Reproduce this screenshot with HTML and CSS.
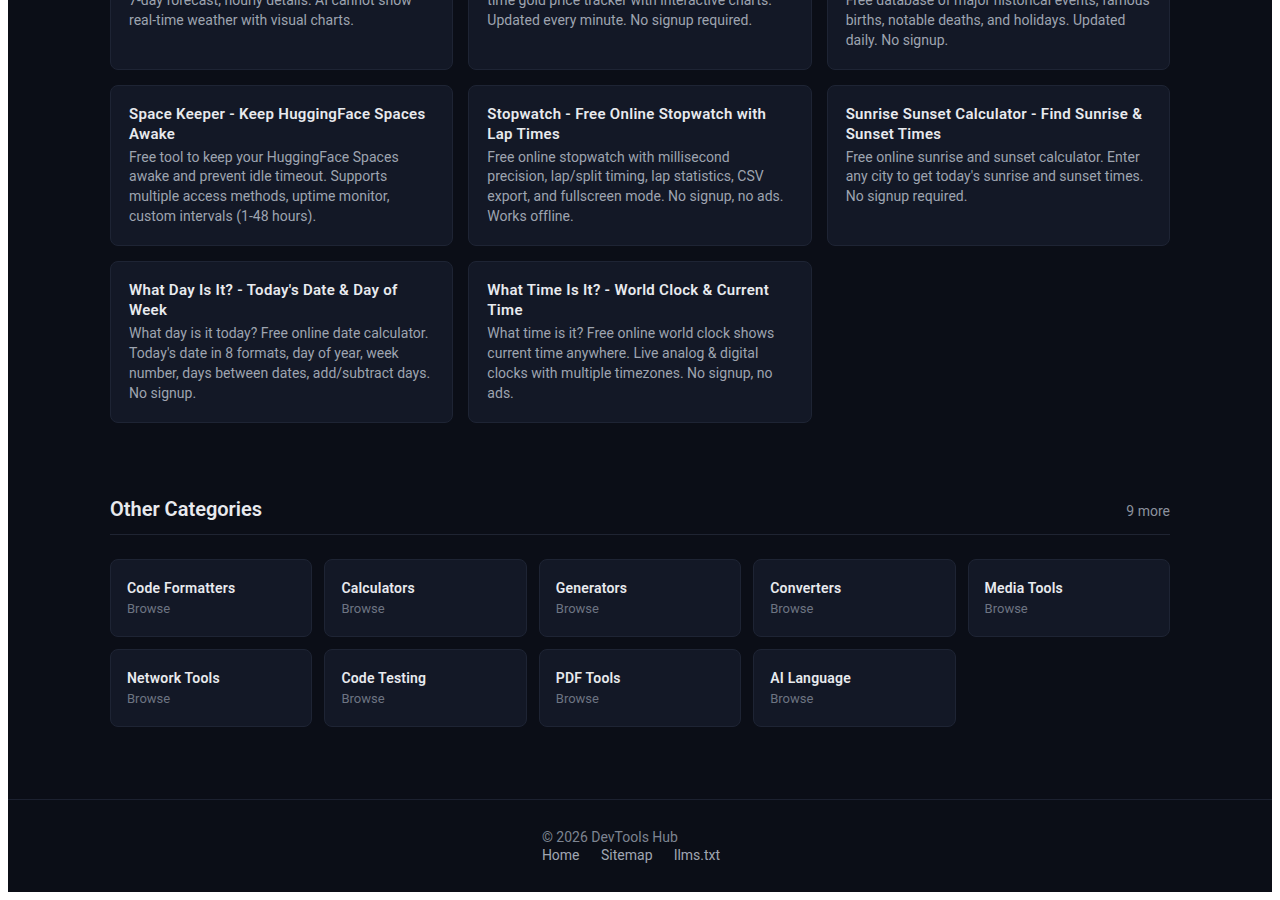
FILE: index.html
```html
<!DOCTYPE html>
<html lang="en">

<head>
    <meta charset="UTF-8">
    <meta name="viewport" content="width=device-width, initial-scale=1.0">
    <title>DevTools Hub</title>
    <link rel="stylesheet" href="styles.css">
</head>

<body>
    <div class="page">
        <main class="container">
            <div class="tools">
                <a class="tool-card" href="#">
                    <h3>Weather Today - Live Forecast</h3>
                    <p>Free local weather for any city: live conditions, 7&#8209;day forecast, hourly details. AI cannot show real-time weather with visual charts.</p>
                </a>
                <a class="tool-card" href="#">
                    <h3>Gold Price Today - Live Chart</h3>
                    <p>Live gold price per ounce and gram today. Real-time gold price tracker with interactive charts. Updated every minute. No signup required.</p>
                </a>
                <a class="tool-card" href="#">
                    <h3>On This Day - Today in History</h3>
                    <p>Discover what happened on any day in history. Free database of major historical events, famous births, notable deaths, and holidays. Updated daily. No signup.</p>
                </a>
                <a class="tool-card" href="#">
                    <h3>Space Keeper - Keep HuggingFace Spaces Awake</h3>
                    <p>Free tool to keep your HuggingFace Spaces awake and prevent idle timeout. Supports multiple access methods, uptime monitor, custom intervals (1-48 hours).</p>
                </a>
                <a class="tool-card" href="#">
                    <h3>Stopwatch - Free Online Stopwatch with Lap Times</h3>
                    <p>Free online stopwatch with millisecond precision, lap/split timing, lap statistics, CSV export, and fullscreen mode. No signup, no ads. Works offline.</p>
                </a>
                <a class="tool-card" href="#">
                    <h3>Sunrise Sunset Calculator - Find Sunrise &amp; Sunset Times</h3>
                    <p>Free online sunrise and sunset calculator. Enter any city to get today's sunrise and sunset times. No signup required.</p>
                </a>
                <a class="tool-card" href="#">
                    <h3>What Day Is It? - Today's Date &amp; Day of Week</h3>
                    <p>What day is it today? Free online date calculator. Today's date in 8 formats, day of year, week number, days between dates, add/subtract days. No signup.</p>
                </a>
                <a class="tool-card" href="#">
                    <h3>What Time Is It? - World Clock &amp; Current Time</h3>
                    <p>What time is it? Free online world clock shows current time anywhere. Live analog &amp; digital clocks with multiple timezones. No signup, no ads.</p>
                </a>
            </div>

            <section class="categories">
                <div class="section-head">
                    <h2>Other Categories</h2>
                    <span class="more">9 more</span>
                </div>
                <div class="cat-grid">
                    <a class="cat-card" href="#"><strong>Code Formatters</strong><span>Browse</span></a>
                    <a class="cat-card" href="#"><strong>Calculators</strong><span>Browse</span></a>
                    <a class="cat-card" href="#"><strong>Generators</strong><span>Browse</span></a>
                    <a class="cat-card" href="#"><strong>Converters</strong><span>Browse</span></a>
                    <a class="cat-card" href="#"><strong>Media Tools</strong><span>Browse</span></a>
                    <a class="cat-card" href="#"><strong>Network Tools</strong><span>Browse</span></a>
                    <a class="cat-card" href="#"><strong>Code Testing</strong><span>Browse</span></a>
                    <a class="cat-card" href="#"><strong>PDF Tools</strong><span>Browse</span></a>
                    <a class="cat-card" href="#"><strong>AI Language</strong><span>Browse</span></a>
                </div>
            </section>
        </main>

        <footer class="footer">
            <div class="footer-inner">
                <p class="copy">&copy; 2026 DevTools Hub</p>
                <nav class="footer-links">
                    <a href="#">Home</a>
                    <a href="#">Sitemap</a>
                    <a href="#">llms.txt</a>
                </nav>
            </div>
        </footer>
    </div>
</body>

</html>
```
FILE: styles.css
```css
body {
    margin: 0 8px 8px;
    font-family: Roboto, "Liberation Sans", sans-serif;
    background: #ffffff;
}

.page {
    background: #0b0e17;
    color: #e5e7eb;
}

a {
    color: inherit;
    text-decoration: none;
}

.container {
    max-width: 1060px;
    margin: 0 auto;
}

/* tool cards (page is scrolled, first row is cut at the top) */
.tools {
    display: grid;
    grid-template-columns: repeat(3, 1fr);
    gap: 15px;
    margin-top: -72px;
}

.tool-card {
    display: block;
    background: #131826;
    border: 1px solid #1e2434;
    border-radius: 8px;
    padding: 18px;
}

.tool-card h3 {
    margin: 0 0 4px;
    font-size: 15px;
    font-weight: 600;
    line-height: 20px;
    letter-spacing: 0.3px;
    color: #e8eaee;
}

.tool-card p {
    margin: 0;
    font-size: 14px;
    line-height: 1.42;
    letter-spacing: 0.02px;
    color: #9ea4b0;
}

/* categories */
.categories {
    margin-top: 72px;
}

.section-head {
    display: flex;
    justify-content: space-between;
    align-items: baseline;
    padding-bottom: 11px;
    border-bottom: 1px solid #1f2432;
    margin-bottom: 24px;
}

.section-head h2 {
    margin: 0;
    font-size: 20px;
    font-weight: 600;
    line-height: 28px;
    color: #e8eaee;
}

.more {
    font-size: 14px;
    color: #8b929e;
}

.cat-grid {
    display: grid;
    grid-template-columns: repeat(5, 1fr);
    gap: 12px;
}

.cat-card {
    display: flex;
    flex-direction: column;
    background: #131826;
    border: 1px solid #1e2434;
    border-radius: 8px;
    padding: 18px 16px;
}

.cat-card strong {
    font-size: 14px;
    font-weight: 600;
    line-height: 20px;
    letter-spacing: 0.2px;
    color: #e8eaee;
}

.cat-card span {
    margin-top: 2px;
    font-size: 13px;
    line-height: 18px;
    color: #6d7482;
}

/* footer */
.footer {
    margin-top: 72px;
    border-top: 1px solid #1c2130;
    padding: 28px 0;
    display: flex;
    justify-content: center;
}

.footer-inner {
    font-size: 14px;
    line-height: 18px;
}

.copy {
    margin: 0;
    color: #7d8491;
}

.footer-links a {
    margin-right: 18px;
    color: #a0a6b2;
}
```
